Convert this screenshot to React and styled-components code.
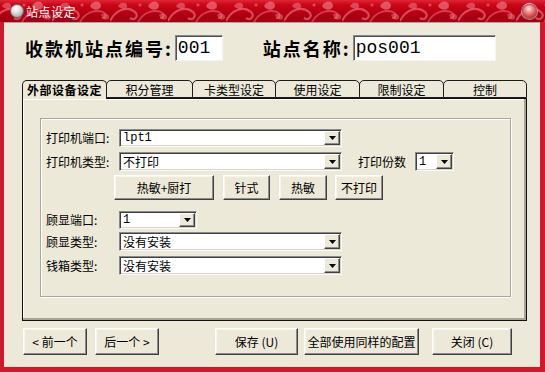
import styled, { createGlobalStyle } from "styled-components";

const GlobalStyle = createGlobalStyle`
  html, body {
    margin: 0;
    padding: 0;
    background: #fff;
  }
  body {
    font-family: "Noto Sans CJK SC", "Liberation Sans", sans-serif;
    font-size: 12px;
    color: #000;
  }
  * { box-sizing: border-box; }
`

const Window = styled.div`
  width: 545px;
  height: 372px;
  display: flex;
  flex-direction: column;
  background: #cf1a2b;
`

const TitleBar = styled.div`
  position: relative;
  height: 22px;
  flex: none;
  display: flex;
  align-items: center;
  padding: 0 8px 0 10px;
  overflow: hidden;
  background: linear-gradient(#e02636 0%, #c80616 22%, #b20012 65%, #a0000f 100%);
`

const TitlePattern = styled.svg`
  position: absolute;
  left: 0;
  top: 0;
  width: 100%;
  height: 100%;
`

const SysIcon = styled.span`
  position: relative;
  width: 14px;
  height: 14px;
  border-radius: 50%;
  border: 1px solid #6e6e6e;
  background: radial-gradient(circle at 40% 30%, #ffffff 0%, #e2e2e2 35%, #a8a8a8 80%, #8a8a8a 100%);
`

const TitleText = styled.span`
  position: relative;
  margin-left: 2px;
  color: #fff;
  font-size: 12px;
  letter-spacing: 0.5px;
`

const CloseKnob = styled.span`
  position: relative;
  margin-left: auto;
  width: 15px;
  height: 15px;
  border-radius: 50%;
  border: 1px solid #7a7a7a;
  box-shadow: 0 0 0 1px rgba(220, 220, 220, 0.6);
  background: radial-gradient(circle at 45% 30%, #ffe0e0 0%, #f39090 30%, #d83a3a 70%, #a81818 100%);
`

const Body = styled.div`
  flex: 1;
  margin: 0 5px 5px 4px;
  background: #ece9d8;
  border-top: 1px solid #a9a9a9;
  display: flex;
  flex-direction: column;
`

const HeaderRow = styled.div`
  display: flex;
  align-items: center;
  height: 26px;
  margin-top: 12px;
  padding-left: 21px;
`

const HeaderLabel = styled.span`
  font-size: 18px;
  font-weight: bold;
  letter-spacing: 2px;
  margin-left: ${p => p.$gap || 0}px;
  white-space: nowrap;
`

const HeaderInput = styled.div`
  width: ${p => p.$w}px;
  height: 26px;
  margin-left: 2px;
  background: #fff;
  border: 1px solid;
  border-color: #8a8a8a #f4f4f4 #f4f4f4 #8a8a8a;
  box-shadow: inset 1px 1px 0 #505050;
  display: flex;
  align-items: center;
  padding-left: 2px;
  font-family: "Liberation Mono", "DejaVu Sans Mono", monospace;
  font-size: 18px;
`

const TabControl = styled.div`
  margin: 19px 0 0 18px;
  width: 505px;
`

const TabStrip = styled.div`
  display: flex;
  align-items: flex-end;
  height: 18px;
`

const Tab = styled.div`
  position: relative;
  width: ${p => p.$w}px;
  height: ${p => (p.$active ? 19 : 18)}px;
  margin-bottom: ${p => (p.$active ? -1 : 0)}px;
  margin-left: ${p => (p.$first ? 0 : -1)}px;
  z-index: ${p => (p.$active ? 2 : 1)};
  border: 1px solid #1c1c1c;
  border-bottom: ${p => (p.$active ? "none" : "1px solid #1c1c1c")};
  border-radius: 5px 5px 0 0;
  background: #ece9d8;
  display: flex;
  align-items: center;
  justify-content: center;
  padding-bottom: ${p => (p.$active ? 1 : 0)}px;
  font-size: 12px;
  font-weight: ${p => (p.$active ? "bold" : "normal")};
  letter-spacing: ${p => (p.$active ? 0.5 : 0)}px;
  white-space: nowrap;
`

const Panel = styled.div`
  height: 223px;
  border: 1px solid #111;
  box-shadow: inset -2px -2px 0 #a7a493, inset 1px 1px 0 #fff;
  padding: 19px 0 0 17px;
`

const GroupBox = styled.div`
  width: 471px;
  height: 179px;
  border: 1px solid #aca899;
  box-shadow: 1px 1px 0 #fff, inset 1px 1px 0 #fff;
  padding: 10px 0 0 5px;
  display: flex;
  flex-direction: column;
`

const FormRow = styled.div`
  display: flex;
  align-items: center;
  height: ${p => p.$h || 19}px;
  margin-top: ${p => p.$mt || 0}px;
`

const Label = styled.span`
  width: ${p => p.$w || 73}px;
  margin-left: ${p => p.$ml || 0}px;
  font-size: 12px;
  white-space: nowrap;
  padding-bottom: 1px;
`

const ComboField = styled.div`
  width: ${p => p.$w}px;
  height: 100%;
  background: #fff;
  border: 1px solid;
  border-color: #8a8a8a #fafafa #fafafa #8a8a8a;
  box-shadow: inset 1px 1px 0 #404040, inset -1px -1px 0 #d8d4c6;
  display: flex;
  align-items: center;
  padding: 1px 1px 1px 2px;
`

const ComboValue = styled.span`
  flex: 1;
  padding-left: 1px;
  font-family: ${p => (p.$mono ? '"Liberation Mono", "DejaVu Sans Mono", monospace' : '"Noto Sans CJK SC", sans-serif')};
  font-size: 12px;
  white-space: nowrap;
  overflow: hidden;
`

const DropButton = styled.span`
  width: 16px;
  height: 100%;
  flex: none;
  background: #ece9d8;
  border: 1px solid;
  border-color: #fff #404040 #404040 #fff;
  box-shadow: inset -1px -1px 0 #8c8c8c;
  display: flex;
  align-items: center;
  justify-content: center;
`

const Button = styled.button`
  width: ${p => p.$w}px;
  height: ${p => p.$h || 25}px;
  margin-left: ${p => p.$ml || 0}px;
  padding: 0;
  background: #ece9d8;
  border: 1px solid;
  border-color: #fff #404040 #404040 #fff;
  box-shadow: inset -1px -1px 0 #8c8c8c, inset 1px 1px 0 #f7f6ee;
  font-family: "Noto Sans CJK SC", "Liberation Sans", sans-serif;
  font-size: 12px;
  color: #000;
  white-space: nowrap;
`

const ButtonRow = styled.div`
  display: flex;
  align-items: center;
  margin-top: 7px;
  padding-left: 19px;
`

function Arrow() {
  return (
    <svg width="7" height="4" viewBox="0 0 7 4">
      <path d="M0 0H7L3.5 4Z" fill="#000" />
    </svg>
  );
}

function Combo({ w, value, mono }) {
  return (
    <ComboField $w={w}>
      <ComboValue $mono={mono}>{value}</ComboValue>
      <DropButton><Arrow /></DropButton>
    </ComboField>
  );
}

const tabs = [
  { name: "外部设备设定", w: 85, active: true },
  { name: "积分管理", w: 87 },
  { name: "卡类型设定", w: 84 },
  { name: "使用设定", w: 85 },
  { name: "限制设定", w: 85 },
  { name: "控制", w: 84 },
];

function App() {
  return (
    <>
      <GlobalStyle />
      <Window>
        <TitleBar>
          <TitlePattern viewBox="0 0 545 22" preserveAspectRatio="none">
            <defs>
              <pattern id="swirl" width="58" height="22" patternUnits="userSpaceOnUse" x="-6">
                <path d="M0 21 C6 9 18 6 25 12 C29 16 25 21 20 18" fill="none" stroke="#f27a86" strokeOpacity="0.6" strokeWidth="2.2" />
                <path d="M28 22 C33 13 42 9 51 12 C55 14 54 19 50 18" fill="none" stroke="#f27a86" strokeOpacity="0.5" strokeWidth="1.8" />
                <path d="M38 6 C41 0 49 0 49 6 C48 11 41 11 38 6Z" fill="#f48592" fillOpacity="0.6" />
                <path d="M8 6 C11 1 18 2 17 7 C15 10 10 9 8 6Z" fill="#f48592" fillOpacity="0.5" />
                <path d="M49 15 C52 12 58 14 57 18 C55 21 51 20 49 15Z" fill="#f48592" fillOpacity="0.45" />
                <circle cx="30" cy="5" r="1.6" fill="#f48592" fillOpacity="0.5" />
              </pattern>
            </defs>
            <rect x="0" y="0" width="545" height="22" fill="url(#swirl)" />
          </TitlePattern>
          <SysIcon />
          <TitleText>站点设定</TitleText>
          <CloseKnob />
        </TitleBar>
        <Body>
          <HeaderRow>
            <HeaderLabel>收款机站点编号:</HeaderLabel>
            <HeaderInput $w={48}>001</HeaderInput>
            <HeaderLabel $gap={40}>站点名称:</HeaderLabel>
            <HeaderInput $w={143}>pos001</HeaderInput>
          </HeaderRow>

          <TabControl>
            <TabStrip>
              {tabs.map((t, i) => (
                <Tab key={t.name} $w={t.w} $active={t.active} $first={i === 0}>
                  {t.name}
                </Tab>
              ))}
            </TabStrip>
            <Panel>
              <GroupBox>
                <FormRow $h={18}>
                  <Label>打印机端口:</Label>
                  <Combo w={223} value="lpt1" mono />
                </FormRow>
                <FormRow $mt={5}>
                  <Label>打印机类型:</Label>
                  <Combo w={223} value="不打印" />
                  <Label $w={57} $ml={16}>打印份数</Label>
                  <Combo w={39} value="1" mono />
                </FormRow>
                <FormRow $h={25} $mt={4}>
                  <Button $w={100} $ml={68}>热敏+厨打</Button>
                  <Button $w={47} $ml={9}>针式</Button>
                  <Button $w={48} $ml={9}>热敏</Button>
                  <Button $w={48} $ml={8}>不打印</Button>
                </FormRow>
                <FormRow $h={18} $mt={11}>
                  <Label>顾显端口:</Label>
                  <Combo w={78} value="1" mono />
                </FormRow>
                <FormRow $mt={3}>
                  <Label>顾显类型:</Label>
                  <Combo w={223} value="没有安装" />
                </FormRow>
                <FormRow $mt={5}>
                  <Label>钱箱类型:</Label>
                  <Combo w={223} value="没有安装" />
                </FormRow>
              </GroupBox>
            </Panel>
          </TabControl>

          <ButtonRow>
            <Button $w={64} $h={27}>&lt; 前一个</Button>
            <Button $w={64} $h={27} $ml={8}>后一个 &gt;</Button>
            <Button $w={83} $h={27} $ml={56}>保存 (U)</Button>
            <Button $w={115} $h={27} $ml={6}>全部使用同样的配置</Button>
            <Button $w={80} $h={27} $ml={13}>关闭 (C)</Button>
          </ButtonRow>
        </Body>
      </Window>
    </>
  );
}

export default App;
